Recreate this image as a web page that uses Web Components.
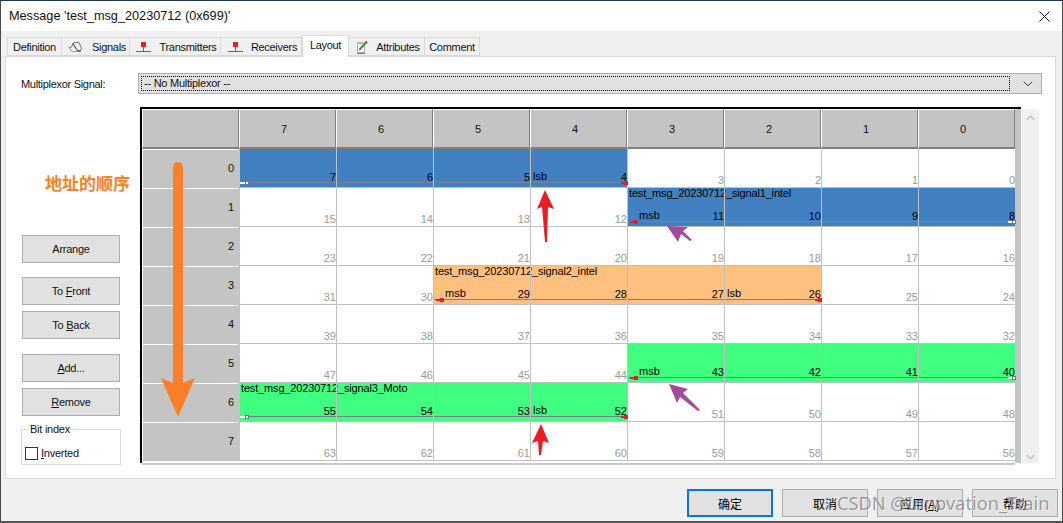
<!DOCTYPE html>
<html lang="en">
<head>
<meta charset="utf-8">
<title>Message layout</title>
<style>
html,body{margin:0;padding:0;background:#333;overflow:hidden}
body{font-family:"Liberation Sans",Arial,"Noto Sans CJK SC",sans-serif;font-size:11px;color:#000}
</style>
</head>
<body>
<x-page>
  <x-dialog>
    <x-titlebar slot="title">Message 'test_msg_20230712 (0x699)'</x-titlebar>
    <x-tabs slot="tabs">
      <x-tab style="width:55px">Definition</x-tab>
      <x-tab style="width:68px" icon="signal">Signals</x-tab>
      <x-tab style="width:91px" icon="node">Transmitters</x-tab>
      <x-tab style="width:81px" icon="node">Receivers</x-tab>
      <x-tab style="width:47px" active>Layout</x-tab>
      <x-tab style="width:76px" icon="note">Attributes</x-tab>
      <x-tab style="width:55px">Comment</x-tab>
    </x-tabs>
    <x-panel slot="panel">
      <x-field-row>
        <span slot="label">Multiplexor Signal:</span>
        <x-combo slot="control">-- No Multiplexor --</x-combo>
      </x-field-row>
      <x-layout-body>
        <x-side-tools slot="tools">
          <x-btn style="margin-top:128px">Arrange</x-btn>
          <x-btn style="margin-top:14px">To <u>F</u>ront</x-btn>
          <x-btn style="margin-top:6px">To <u>B</u>ack</x-btn>
          <x-btn style="margin-top:15px"><u>A</u>dd...</x-btn>
          <x-btn style="margin-top:6px"><u>R</u>emove</x-btn>
          <x-group legend="Bit index" style="margin-top:13px"><x-check><u>I</u>nverted</x-check></x-group>
        </x-side-tools>
        <x-bit-grid slot="grid"></x-bit-grid>
      </x-layout-body>
    </x-panel>
    <x-footer slot="footer">
      <x-btn wide primary>确定</x-btn>
      <x-btn wide>取消</x-btn>
      <x-btn wide>应用(<u>A</u>)</x-btn>
      <x-btn wide>帮助</x-btn>
    </x-footer>
  </x-dialog>
  <x-annotations></x-annotations>
</x-page>
<script>
function def(name, css, html, setup){
  customElements.define(name, class extends HTMLElement{
    constructor(){
      super();
      this.attachShadow({mode:'open'});
    }
    connectedCallback(){
      if(this._done)return;
      this._done=true;
      const r=this.shadowRoot;
      r.innerHTML='<style>'+css+'</style>'+(typeof html==='function'?html(this):html);
      if(setup)setup(this,r);
    }
  });
}
const FONT='"Liberation Sans",Arial,"Noto Sans CJK SC",sans-serif';

def('x-page',':host{display:block;position:relative;width:1063px;height:523px;overflow:hidden}','<slot></slot>');

def('x-dialog',
`:host{display:flex;flex-direction:column;box-sizing:border-box;width:1063px;height:523px;background:#f0f0f0;
 border-top:1px solid #1c3650;border-left:1px solid #4a4a4a;border-right:1px solid #4a4a4a;border-bottom:2px solid #555;font:11px ${FONT}}`,
`<slot name="title"></slot><slot name="tabs"></slot><slot name="panel"></slot><slot name="footer"></slot>`);

def('x-titlebar',
`:host{display:flex;align-items:center;justify-content:space-between;height:30px;background:#fff;padding:0 12px 0 8px;font:12.7px ${FONT};color:#111;box-sizing:border-box}
 svg{display:block}`,
`<span><slot></slot></span><svg width="11" height="11" viewBox="0 0 11 11"><path d="M.5.5l10 10M10.500.5l-10 10" stroke="#111" stroke-width="1" fill="none"/></svg>`);

def('x-tabs',
`:host{display:flex;align-items:flex-start;box-sizing:border-box;height:25px;padding:6px 0 0 6px}`,
`<slot></slot>`);

const ICONS={
 signal:`<svg width="16" height="12" viewBox="0 0 16 12"><path d="M1 6.500h2L6 1.500h5l3 7" fill="none" stroke="#777"/><path d="M1 6.500l3 4h7l3-4" fill="none" stroke="#999"/><path d="M5 2.500l3 5 2 2.500h3" fill="none" stroke="#222"/><path d="M4 3h2" stroke="#a03f9a"/></svg>`,
 node:`<svg width="15" height="12" viewBox="0 0 15 12"><rect x="5" y="1" width="5" height="5" fill="#ed1c24"/><rect x="7" y="6" width="1" height="4" fill="#666"/><rect x="0" y="10" width="15" height="1" fill="#666"/></svg>`,
 note:`<svg width="12" height="14" viewBox="0 0 12 14"><path d="M1.500 3.500h7v9h-7z" fill="#fff" stroke="#aaa"/><path d="M1 13.500h8" stroke="#777"/><path d="M1.500 2.500h1M3.500 2.500h1M5.500 2.500h1" stroke="#888"/><path d="M3.500 9.500L10 2.500" stroke="#3c9a28" stroke-width="2"/><path d="M9.500 3L11 1.500" stroke="#d22" stroke-width="2"/><path d="M3 10.500l1-1" stroke="#222"/></svg>`
};
def('x-tab',
`:host{display:flex;align-items:center;justify-content:center;gap:8px;box-sizing:border-box;height:19px;background:#f0f0f0;border:1px solid #d9d9d9;border-left:0;color:#111;white-space:nowrap;padding-top:1px;letter-spacing:-.3px}
 :host(:first-child){border-left:1px solid #d9d9d9}
 :host([icon]){padding-left:3px}
 :host([active]){height:22px;margin-top:-2px;background:#fff;border:1px solid #d9d9d9;border-bottom:0;position:relative;z-index:2;align-items:flex-start;padding-top:3px}
 svg{display:block;flex:none}`,
 el=>(ICONS[el.getAttribute('icon')]||'')+'<span><slot></slot></span>');

def('x-panel',
`:host{display:block;box-sizing:border-box;margin-left:4px;width:1051px;height:423px;background:#fff;border:1px solid #d9d9d9;padding:16px 0 0 15px;color:#111}`,
`<slot></slot>`);

def('x-field-row',
`:host{display:flex;align-items:center;height:21px}
 .l{width:117px;flex:none;font-size:11px;letter-spacing:-.3px}`,
`<div class="l"><slot name="label"></slot></div><slot name="control"></slot>`);

def('x-combo',
`:host{display:flex;align-items:center;box-sizing:border-box;width:904px;height:21px;background:#e1e1e1;border:1px solid #adadad;padding:2px 8px 2px 2px;letter-spacing:-.25px}
 .f{flex:1;height:15px;box-sizing:border-box;border:1px dotted #000;padding-left:2px;line-height:13px}
 svg{margin-left:13px;flex:none}`,
`<div class="f"><slot></slot></div><svg width="10" height="6" viewBox="0 0 10 6"><path d="M.8.800L5 4.800 9.200.800" fill="none" stroke="#444" stroke-width="1"/></svg>`);

def('x-layout-body',
`:host{display:flex;margin-top:13px}
 .t{width:119px;flex:none}`,
`<div class="t"><slot name="tools"></slot></div><slot name="grid"></slot>`);

def('x-side-tools',`:host{display:flex;flex-direction:column;align-items:flex-start;letter-spacing:-.25px}`,`<slot></slot>`);

def('x-btn',
`:host{display:flex;align-items:center;justify-content:center;box-sizing:border-box;width:98px;height:28px;margin-left:1px;background:#e1e1e1;border:1px solid #adadad;color:#111;font-size:11px;white-space:nowrap}
 :host([wide]){width:86px;margin-left:0;font-size:12px;color:#000}
 :host([primary]){border:2px solid #0078d7}`,
`<span><slot></slot></span>`);

def('x-group',
`:host{display:block;position:relative;box-sizing:border-box;width:100px;height:36px;border:1px solid #dcdcdc;padding:17px 0 0 3px}
 .lg{position:absolute;left:7px;top:-7px;background:#fff;padding:0 1px;line-height:13px}`,
el=>`<div class="lg">${el.getAttribute('legend')}</div><slot></slot>`);

def('x-check',
`:host{display:flex;align-items:center;gap:3px;line-height:13px}
 i{display:block;width:13px;height:13px;box-sizing:border-box;border:1px solid #333;background:#fff}`,
`<i></i><span><slot></slot></span>`);

def('x-footer',
`:host{display:flex;justify-content:flex-end;gap:9px;box-sizing:border-box;flex:1;padding:10px 4px 0 0}`,
`<slot></slot>`);

/* grid pieces */
def('x-col-head',
`:host{display:flex;align-items:center;justify-content:center;box-sizing:border-box;height:40px;background:#c4c4c4;border-top:1px solid #fff;border-left:1px solid #fff;border-right:1px solid #808080;border-bottom:2px solid #808080;padding-right:7px;color:#111;padding-top:1px}`,
`<slot></slot>`);
def('x-row-head',
`:host{display:flex;align-items:flex-start;justify-content:flex-end;box-sizing:border-box;height:39px;background:#c4c4c4 linear-gradient(#fff,#fff) no-repeat 0 0/95px 1px;border-left:1px solid #fff;padding:13px 6px 0 0;color:#111}`,
`<slot></slot>`);
def('x-bit',
`:host{display:flex;align-items:flex-end;justify-content:flex-end;box-sizing:border-box;position:relative;border-right:1px solid #c0c0c0;border-bottom:1px solid #c0c0c0;color:#9a9a9a;line-height:13px;padding-bottom:0}
 :host([on]){color:#000;padding-bottom:3px}
 :host([last]){border-right:0}`,
`<slot></slot>`);

def('x-band',
`:host{display:block;position:relative;height:38px;font-size:11px;color:#000;line-height:13px}
 .title{padding-left:1px;margin-top:-1px;white-space:nowrap;position:relative;letter-spacing:-.16px}
 .line{position:absolute;left:0;right:0;top:33px;height:1px;background:#808080}
 .tag{position:absolute;top:21px}
 .m{position:absolute;top:33px;height:2px;z-index:2}
 .s{position:absolute;top:32px;width:4px;height:4px;box-sizing:border-box;z-index:2}
 .red{background:#ed1c24}
 .wht{background:#fff}
 .s.wht{border:1px solid #777;background:#fff}`,
el=>{
  const a=n=>el.getAttribute(n);
  const mk=(side,kind)=>{
    if(side==='l'){
      return kind==='red'
       ?`<div class="m red" style="left:2px;width:5px"></div><div class="s red" style="left:6px"></div>`
       :`<div class="m wht" style="left:0;width:5px"></div><div class="s wht" style="left:5px"></div>`;
    }
    return kind==='red'
       ?`<div class="m red" style="right:1px;width:6px"></div><div class="s red" style="right:0"></div>`
       :`<div class="m wht" style="right:2px;width:5px"></div><div class="s wht" style="right:-1px"></div>`;
  };
  return (a('label')?`<div class="title">${a('label')}</div>`:'')
    +`<div class="line"></div>`
    +mk('l',a('l'))+mk('r',a('r'))
    +(a('msb')!==null?`<div class="tag" style="left:${a('msb')}px">msb</div>`:'')
    +(a('lsb')!==null?`<div class="tag" style="left:${a('lsb')}px">lsb</div>`:'');
});

def('x-bit-grid',
`:host{display:flex;width:899px;align-items:flex-start}
 .wrap{width:881px;flex:none;border-top:2px solid #000;display:flex;flex-wrap:wrap;position:relative}
 .main{width:875px;box-sizing:border-box;border-left:2px solid #000;background:#fff}
 .head{display:grid;grid-template-columns:repeat(9,97px)}
 .body{display:grid;grid-template-columns:98px repeat(7,97px) 96px;grid-template-rows:repeat(8,39px)}
 .strip{width:6px;height:354px;background:#c4c4c4}
 .foot{height:2px;margin:1px 0 0 2px;width:873px;background:#c8c8c8;margin-top:-1px;position:relative;top:1px}
 .sb{position:relative;width:17px;height:354px;margin:2px 0 0 1px;background:#f0f0f0;display:flex;flex-direction:column;justify-content:space-between;align-items:center;padding:6px 0 3px;box-sizing:border-box}
 svg{display:block}`,
`<div class="wrap"><div class="main"><div class="head"></div><div class="body"></div></div><div class="strip"></div><div class="foot"></div></div>
 <div class="sb"><svg width="9" height="6" viewBox="0 0 9 6"><path d="M.8 5L4.500 1.200 8.200 5" fill="none" stroke="#c4c4c4" stroke-width="1.600"/></svg><svg width="9" height="6" viewBox="0 0 9 6"><path d="M.8 1L4.500 4.800 8.200 1" fill="none" stroke="#c4c4c4" stroke-width="1.600"/></svg></div>`,
(el,root)=>{
  const head=root.querySelector('.head'), body=root.querySelector('.body');
  const add=(p,tag,txt,attrs,st)=>{const e=document.createElement(tag);if(txt!==null)e.textContent=txt;for(const k in attrs||{})e.setAttribute(k,attrs[k]);if(st)e.style.cssText=st;p.appendChild(e);return e;};
  add(head,'x-col-head','');
  for(let i=7;i>=0;i--)add(head,'x-col-head',String(i));
  const bands=[
   {row:0,col:0,color:'#4181c2',l:'wht',r:'red',lsb:293},
   {row:1,col:4,color:'#4181c2',l:'red',r:'wht',msb:11,label:'test_msg_20230712_signal1_intel'},
   {row:3,col:2,color:'#ffc080',l:'red',r:'red',msb:11,lsb:293,label:'test_msg_20230712_signal2_intel'},
   {row:5,col:4,color:'#40ff80',l:'red',r:'wht',msb:11},
   {row:6,col:0,color:'#40ff80',l:'wht',r:'red',lsb:293,label:'test_msg_20230712_signal3_Moto'}
  ];
  const inBand=(r,c)=>bands.some(b=>b.row===r&&c>=b.col&&c<b.col+4);
  bands.forEach(b=>{
    const at={l:b.l,r:b.r};
    if(b.msb!==undefined)at.msb=b.msb;
    if(b.lsb!==undefined)at.lsb=b.lsb;
    if(b.label)at.label=b.label;
    add(body,'x-band',null,at,`grid-row:${b.row+1};grid-column:${b.col+2}/span 4;background:${b.color}`);
  });
  for(let r=0;r<8;r++){
    add(body,'x-row-head',String(r),null,`grid-row:${r+1};grid-column:1`);
    for(let c=0;c<8;c++){
      const at={};
      if(inBand(r,c))at.on='';
      if(c===7)at.last='';
      add(body,'x-bit',String(r*8+7-c),at,`grid-row:${r+1};grid-column:${c+2}`);
    }
  }
});

def('x-annotations',
`:host{position:absolute;left:0;top:0;width:1063px;height:523px;pointer-events:none;display:block}
 svg{position:absolute;left:0;top:0}
 .cn{position:absolute;left:45px;top:173px;font:bold 17px/20px "Noto Sans CJK SC",sans-serif;color:#ff7f27;white-space:nowrap}
 .wm{position:absolute;left:837px;top:490px;font:18.2px/26px "Noto Sans","Open Sans",sans-serif;color:rgba(105,105,105,.62);text-shadow:1px 1px 0 rgba(255,255,255,.55);white-space:nowrap}`,
`<svg width="1063" height="523" viewBox="0 0 1063 523">
  <path fill="#ff7f27" d="M173 167a5 5 0 0 1 10 0V383L195 378 178 417 161 378 173 383Z"/>
  <path fill="#ed1c24" d="M545 190L554 209 548 207 547 242 545 242 542 207 537 209Z"/>
  <path fill="#ed1c24" d="M541 424L549 443 543 441 541 455 539 455 538 441 532 443Z"/>
  <path fill="#a349a4" d="M667 226L688 227 683 231 692 240 690 241 681 234 678 242Z"/>
  <path fill="#a349a4" d="M669 384L688 389 683 393 700 410 698 411 680 397 677 403Z"/>
 </svg>
 <div class="cn">地址的顺序</div>
 <div class="wm">CSDN @Innovation_Train</div>`);
</script>
</body>
</html>
